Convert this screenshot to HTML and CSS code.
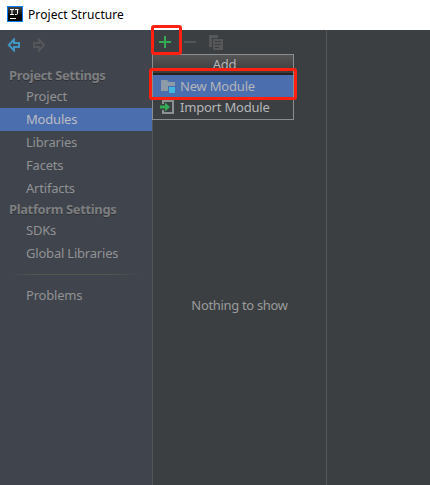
FILE: index.html
```html
<!DOCTYPE html>
<html lang="en">
<head>
<meta charset="utf-8">
<title>Project Structure</title>
<link rel="stylesheet" href="styles.css">
</head>
<body>
<header class="titlebar">
  <svg class="logo" width="16" height="16" viewBox="0 0 16 16"><defs><linearGradient id="g" x2="0" y2="1"><stop stop-color="#454545"/><stop offset=".6" stop-color="#080808"/></linearGradient></defs><path fill="#087cfa" d="M0 0h16v16H0z"/><path fill="url(#g)" d="M1 1h14v14H1z"/><path d="M3 3.500h4M3 8.500h4M5 3v6M8 3.500h3.500M10.500 3v4.500q0 1-1 1H8M3 12.500h6" fill="none" stroke="#fff"/></svg>
  <span>Project Structure</span>
</header>
<main class="window">
  <nav class="sidebar">
    <div class="history">
      <svg width="14" height="14" viewBox="0 0 14 14"><path d="M7 1.500 1.800 7 7 12.500V9h5V5H7z" fill="none" stroke="#4294c3" stroke-width="2"/></svg>
      <svg width="14" height="14" viewBox="0 0 14 14"><path d="M7 1.500 12.200 7 7 12.500V9H2V5h5z" fill="none" stroke="#555658" stroke-width="2"/></svg>
    </div>
    <h2 class="group first">Project Settings</h2>
    <ul class="list">
      <li>Project</li>
      <li class="selected">Modules</li>
      <li>Libraries</li>
      <li>Facets</li>
      <li>Artifacts</li>
    </ul>
    <h2 class="group">Platform Settings</h2>
    <ul class="list">
      <li>SDKs</li>
      <li>Global Libraries</li>
    </ul>
    <div class="rule"></div>
    <ul class="list"><li>Problems</li></ul>
  </nav>
  <section class="modules">
    <div class="toolbar">
      <svg width="70" height="22" viewBox="0 0 70 22"><path d="M6 11h12M12 5v12" stroke="#35aa55" stroke-width="2"/><path d="M31 11h12" stroke="#555556" stroke-width="2"/><path d="M56 4h9v3h-6v9h-3z" fill="#555758"/><path d="M60 8h10v11H60z" fill="#555758"/><path d="M62 10.500h6M62 13.500h6M62 16.500h4" stroke="#3c3f41"/></svg>
    </div>
    <p class="empty">Nothing to show</p>
    <div class="popup">
      <div class="popup-title">Add</div>
      <div class="item active">
        <svg width="16" height="16" viewBox="0 0 16 16"><path fill="#8d9aa8" d="M1 2h6l2 2h6v4H8v5H1z"/><path fill="#40b6e0" d="M9 9h6v6H9z"/></svg>
        <span>New Module</span>
      </div>
      <div class="item import">
        <svg width="16" height="16" viewBox="0 0 16 16"><path d="M3 5V2h10v12H3v-3" fill="none" stroke="#8b9092" stroke-width="2"/><path fill="#35aa55" d="M0 6.500h5V3.500L10 8l-5 4.500v-3H0z"/></svg>
        <span>Import Module</span>
      </div>
    </div>
    <div class="mark mark-plus"></div>
    <div class="mark mark-item"></div>
  </section>
  <section class="details"></section>
</main>
</body>
</html>
```
FILE: styles.css
```css
* { box-sizing: border-box; }
body { margin: 0; height: 485px; overflow: hidden; font: 13px/23px "Noto Sans", sans-serif; letter-spacing: -0.2px; color: #999b9c; background: #3c3f41; }
.titlebar { height: 30px; padding: 0 7px; display: flex; align-items: center; gap: 5px; background: #fff; color: #000; font-size: 12px; letter-spacing: 0.08px; }
.titlebar span { margin-top: -1px; }
.logo { margin-top: -2px; }
.window { height: 455px; display: flex; }
.sidebar { width: 153px; background: #40444c; border-right: 1px solid #555555; }
.history { height: 36px; padding: 8px 7px 0; display: flex; gap: 11px; }
.group { margin: 0; height: 19px; padding-left: 9px; font-size: 13px; line-height: 19px; letter-spacing: -0.37px; font-weight: 700; color: #7c7e80; text-shadow: 0 1px #303236; white-space: nowrap; }
.list { margin: 0; padding: 0; list-style: none; }
.list li { height: 23px; padding-left: 26px; color: #909294; }
.list .selected { background: #4b6eaf; color: #bbbdc2; }
.rule { height: 1px; margin: 9px 9px; background: linear-gradient(90deg, #40444c, #555550 20%, #555550 75%, #40444c); }
.modules { position: relative; width: 174px; border-right: 1px solid #555759; }
.toolbar { height: 22px; padding-top: 1px; }
.toolbar svg { display: block; }
.empty { margin: 242px 0 0; text-align: center; letter-spacing: -0.33px; }
.popup { position: absolute; left: -1px; top: 24px; width: 142px; height: 66px; border: 1px solid #8b8d8e; background: #3c3f41; color: #b4b6b8; }
.popup-title { height: 20px; padding-left: 3px; line-height: 19px; text-align: center; background: linear-gradient(#555, #3c3c3c); border-bottom: 2px solid #222; }
.item { height: 22px; line-height: 22px; padding-left: 7px; display: flex; align-items: center; gap: 4px; }
.import { height: 20px; line-height: 20px; }
.active { background: #4b6eaf; }
.mark { position: absolute; border: 3px solid #ff2012; border-radius: 3px; }
.mark-plus { left: -2px; top: -5px; width: 31px; height: 30px; }
.mark-item { left: -4px; top: 38px; width: 148px; height: 32px; }
```
